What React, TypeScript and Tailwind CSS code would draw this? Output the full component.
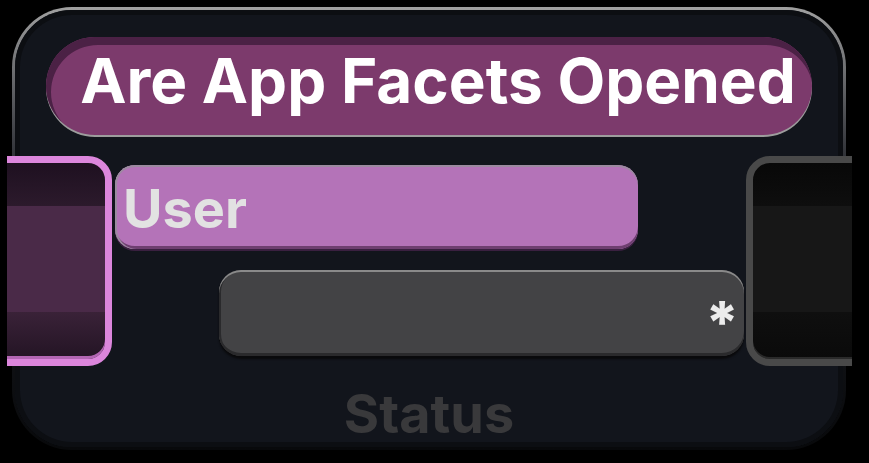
import React from "react";

export default function App() {
  return (
    <div
      className="w-[869px] h-[463px] bg-black overflow-hidden"
      style={{ fontFamily: "Inter, 'Noto Sans', 'Liberation Sans', sans-serif" }}
    >
      <div className="ml-[12px] mt-[7px] w-[834px] h-[443px] rounded-[60px] p-[3px] bg-gradient-to-b from-[#a0a0a0] via-[#1e2026] via-40% to-[#08090b]">
        <div className="w-full h-full rounded-[57px] bg-[#12151c] shadow-[inset_0_0_0_5px_#0c0e12] flex flex-col">
          {/* Title */}
          <div className="mt-[27px] mx-[31px] h-[98px] rounded-full bg-[#7c3a6c] shadow-[inset_3px_6px_0_2px_#4b2145,0_2px_0_#9d9d9d] flex items-center justify-center pl-[18px] pb-[10px]">
            <span className="text-white font-bold text-[62px] leading-none tracking-[0px]">
              Are App Facets Opened
            </span>
          </div>

          {/* Middle row */}
          <div className="flex mt-[21px] ml-[-8px] h-[210px]">
            {/* Left port (clipped at left) */}
            <div className="w-[105px] h-[210px] overflow-hidden shrink-0">
              <div className="ml-[-30px] w-[135px] h-[210px] rounded-[24px] border-[7px] border-[#dc86dc] shadow-[inset_0_-3px_0_#b366b3] bg-[linear-gradient(to_bottom,#1e1020_0%,#2c1a2c_22%,#4a2a48_22%,#4a2a48_76%,#3a2238_76%,#231424_100%)]" />
            </div>

            {/* Center column */}
            <div className="w-[634px] shrink-0 flex flex-col">
              <div className="ml-[3px] mt-[9px] w-[523px] h-[84px] rounded-[20px] bg-[#b473b8] shadow-[inset_0_2px_0_#9c8aa0,inset_2px_0_0_#9c8aa0,inset_0_-3px_0_#6e3f70,0_2px_0_#3a2040] flex items-center pl-[8px]">
                <span className="text-[#e2e2e2] font-bold text-[54px] leading-none mt-[4px]">User</span>
              </div>
              <div className="ml-[107px] mt-[21px] w-[525px] h-[86px] rounded-[22px] bg-[#434345] shadow-[inset_0_2px_0_#8a8a8a,inset_2px_0_0_#2a2a2c,inset_0_-3px_0_#2a2a2c,0_3px_2px_#0a0a0c] flex items-center justify-end pr-[5px]">
                <span className="text-[#ececec] font-extrabold text-[58px] leading-none mt-[18px]">*</span>
              </div>
            </div>

            {/* Right port (clipped at right) */}
            <div className="w-[106px] h-[210px] overflow-hidden shrink-0">
              <div className="w-[140px] h-[210px] rounded-[24px] border-[7px] border-[#494949] shadow-[inset_0_-2px_0_#2a2a2a] bg-[linear-gradient(to_bottom,#080808_0%,#0e0e0e_22%,#171717_22%,#171717_76%,#0f0f0f_76%,#0a0a0a_100%)]" />
            </div>
          </div>

          {/* Status */}
          <div className="mt-[21px] text-center text-[#39393b] font-bold text-[54px] leading-none">
            Status
          </div>
        </div>
      </div>
    </div>
  );
}
